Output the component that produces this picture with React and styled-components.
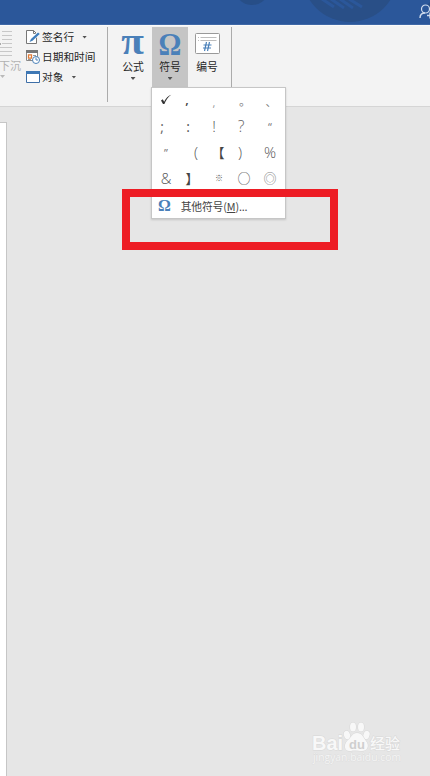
import React from 'react';
import styled, { createGlobalStyle } from 'styled-components';

const Global = createGlobalStyle`
  * { box-sizing: border-box; }
  body { margin: 0; background: #e6e6e6; }
`;
const Window = styled.div`
  position: relative;
  display: flex;
  flex-direction: column;
  width: 430px;
  height: 776px;
  overflow: hidden;
  background: #e6e6e6;
  color: #262626;
  font: 11px/16px "Noto Sans CJK SC", sans-serif;
  svg { display: block; flex: none; }
`;
const TitleBar = styled.header`
  height: 25px;
  flex: none;
  background: #2b579a;
  border-bottom: 1px solid #3f68a6;
`;
const Ribbon = styled.section`
  display: flex;
  height: 82px;
  flex: none;
  padding-top: 1px;
  background: #f3f3f3;
  border-top: 1px solid #fafafa;
  border-bottom: 1px solid #d5d5d5;
`;
const DropCap = styled.div`
  width: 26px;
  flex: none;
  padding-top: 4px;
  color: #b1b1b1;
`;
const DropLabel = styled.div`
  margin: 0 0 2px -1px;
  white-space: nowrap;
`;
const Commands = styled.div`
  display: flex;
  flex-direction: column;
  width: 81px;
  flex: none;
`;
const Command = styled.div`
  display: flex;
  align-items: center;
  gap: 2px;
  height: 20px;
  white-space: nowrap;
  font-size: 10.7px;
`;
const Caret = styled.i`
  width: 5px;
  height: 3px;
  flex: none;
  margin-left: ${p => p.$gap || 0}px;
  background: ${p => p.$color || '#505050'};
  clip-path: polygon(0 0, 100% 0, 50% 100%);
`;
const Divider = styled.div`
  width: 1px;
  height: 75px;
  flex: none;
  margin-left: ${p => p.$before || 0}px;
  background: #ababab;
`;
const Tool = styled.div`
  display: flex;
  flex-direction: column;
  align-items: center;
  width: 36px;
  height: 61px;
  flex: none;
  padding-top: 2px;
  background: ${p => (p.$active ? '#c5c5c5' : 'transparent')};
`;
const Tools = styled.div`
  display: flex;
  padding-left: 7px;
  gap: 1px;
`;
const ToolArt = styled.div`
  display: flex;
  justify-content: center;
  align-items: center;
  width: 26px;
  height: 29px;
`;
const ToolLabel = styled.div`
  margin-bottom: 3px;
  white-space: nowrap;
  font-size: 10.8px;
`;
const Greek = styled.span`
  color: #4a80b9;
  font: bold ${p => p.$size}px/28px "Liberation Serif", serif;
  transform: translateY(${p => p.$dy || 0}px) scale(${p => p.$sx || 1}, ${p => p.$sy || 1});
`;
const Paper = styled.div`
  width: 7px;
  height: 654px;
  margin-top: 15px;
  background: #fff;
  border: solid #c6c6c6;
  border-width: 1px 1px 0 0;
`;
const Menu = styled.div`
  position: absolute;
  left: 151px;
  top: 87px;
  width: 135px;
  height: 132px;
  background: #fff;
  border: 1px solid #c6c6c6;
  box-shadow: 0 1px 2px rgba(0,0,0,.15);
`;
const Symbols = styled.div`
  display: grid;
  grid-template-columns: repeat(5, 26px);
  grid-auto-rows: 26px;
  padding: 0 1px;
  height: 106px;
`;
const Cell = styled.div`
  display: flex;
  justify-content: center;
  align-items: center;
`;
const Glyph = styled.span`
  font: ${p => p.$weight || 300} ${p => p.$size || 14}px/20px ${p => p.$font || '"Open Sans"'}, "Noto Sans CJK SC", sans-serif;
  color: ${p => p.$color || '#555'};
  transform: translate(${p => p.$x || 0}px, ${p => p.$y || 0}px);
`;
const MenuItem = styled.div`
  display: flex;
  align-items: center;
  gap: 10px;
  height: 24px;
  padding-left: 6px;
  color: #444;
  font-size: 10.8px;
  letter-spacing: -0.15px;
  white-space: nowrap;
`;
const Marker = styled.div`
  position: absolute;
  left: 122px;
  top: 189px;
  width: 216px;
  height: 61px;
  border: 8px solid #ed1c24;
`;
const TitleArt = styled.svg`
  position: absolute;
  left: 190px;
  top: 0;
`;
const Watermark = styled.svg`
  position: absolute;
  left: 308px;
  top: 718px;
`;

const cjk = '"Noto Sans CJK SC"';
const symbols = [
  { check: true },
  { t: ',', $x: -5, $y: -2, $weight: 600, $color: '#444', $size: 13 },
  { t: ',', $x: -4, $y: 2, $size: 11, $weight: 400, $color: '#999' },
  { t: '。', $font: cjk, $size: 12, $weight: 400, $color: '#888', $x: 1 },
  { t: '、', $font: cjk, $size: 11, $weight: 400, $color: '#777', $x: 1, $y: 0 },
  { t: ';', $x: -4, $weight: 400, $color: '#666' },
  { t: ':', $x: -4, $weight: 400 },
  { t: '!', $x: -4, $size: 15, $y: -1 },
  { t: '?', $x: -3, $size: 16, $color: '#666', $y: -1 },
  { t: '“', $size: 11, $weight: 400, $color: '#777' },
  { t: '”', $size: 11, $weight: 400, $color: '#777' },
  { t: '(', $x: 4, $size: 15, $y: -1 },
  { t: '【', $font: cjk, $size: 13, $weight: 400, $color: '#444' },
  { t: ')', $x: -4, $size: 15, $y: -1 },
  { t: '%', $size: 15, $y: -1 },
  { t: '&', $size: 15, $y: -1 },
  { t: '】', $font: cjk, $size: 13, $weight: 400, $color: '#444' },
  { t: '※', $font: cjk, $size: 8, $weight: 400, $x: 1, $y: -1 },
  { t: '○', $font: cjk, $size: 13, $weight: 400, $color: '#555', $y: -1 },
  { t: '◎', $font: cjk, $size: 13, $weight: 400, $color: '#888', $y: -1 },
];

const Check = () => (
  <svg width="14" height="16" viewBox="0 0 14 16">
    <path d="M2 7.5 3.8 6.3 5.1 8.7 C7 5 9 3 12.3 1.7 C9 4 7 7 5.4 11 L4 11Z" fill="#333" />
  </svg>
);
const SignatureIcon = () => (
  <svg width="14" height="14" viewBox="0 0 14 14">
    <path d="M.5.5h7l3 3v10H.5Z" fill="#fff" stroke="#777" />
    <path d="M7.5.5v3h3" fill="none" stroke="#777" />
    <path d="M4 9 11.3 2 14 4.4 6.5 11.3 3 12.5Z" fill="#fff" />
    <path d="m5 9 7-6.5L13.8 4 6.5 10.7 3.5 12Z" fill="#3f7ebd" />
  </svg>
);
const DateIcon = () => (
  <svg width="14" height="14" viewBox="0 0 14 14">
    <path d="M.5 1.5h11v9H.5Z" fill="#fff" stroke="#888" />
    <path d="M0 0h12v3H0Z" fill="#777" />
    <path d="M2.5 4.8h3v3.4h-3Z" fill="#fff" stroke="#e07a35" strokeWidth="1.3" />
    <path d="M7 5.5h3M2 9.5h3" stroke="#999" />
    <circle cx="10" cy="10" r="3.5" fill="#fff" stroke="#4c82b8" />
    <path d="M10 7.5V10h2" fill="none" stroke="#4c82b8" />
  </svg>
);
const ObjectIcon = () => (
  <svg width="14" height="12" viewBox="0 0 14 12">
    <path d="M.5.5h13v11H.5Z" fill="#fff" stroke="#3e6fa7" />
    <path d="M0 0h14v3H0Z" fill="#3e78b5" />
  </svg>
);
const NumberIcon = () => (
  <svg width="25" height="22" viewBox="0 0 25 22">
    <rect x=".5" y=".5" width="24" height="20" rx="1" fill="#fff" stroke="#999" />
    <path d="M3 4.5h1m1.5 0h16M3 7.5h1m1.5 0h16" stroke="#bdbdbd" />
    <path d="m11.5 9-2 9m5-9-2 9m-4-6h8m-8.5 3h8" fill="none" stroke="#4a80b9" strokeWidth="1.2" />
  </svg>
);

export default function App() {
  return (
    <Window>
      <Global />
      <TitleBar />
      <Ribbon>
        <DropCap>
          <svg width="13" height="26" viewBox="0 0 13 26">
            <path d="M2 .5h10M2 4.5h10M2 8.5h10M2 12.5h10M0 16.5h12M0 20.5h12M0 24.5h12" stroke="#c8c8c8" />
            <path d="M0 12v2h1v-2Z" fill="#aaa" />
          </svg>
          <DropLabel>下沉</DropLabel>
          <Caret as="div" $color="#b9b9b9" />
        </DropCap>
        <Commands>
          <Command><SignatureIcon />签名行<Caret $gap={6} /></Command>
          <Command><DateIcon />日期和时间</Command>
          <Command><ObjectIcon />对象<Caret $gap={6} /></Command>
        </Commands>
        <Divider />
        <Tools>
          <Tool><ToolArt><Greek $size={35} $dy={-2} $sx={1.18} $sy={1.08}>π</Greek></ToolArt><ToolLabel>公式</ToolLabel><Caret /></Tool>
          <Tool $active><ToolArt><Greek $size={30} $sx={0.95} $sy={1.08}>Ω</Greek></ToolArt><ToolLabel>符号</ToolLabel><Caret /></Tool>
          <Tool><ToolArt><NumberIcon /></ToolArt><ToolLabel>编号</ToolLabel></Tool>
        </Tools>
        <Divider $before={6} />
      </Ribbon>
      <Paper />
      <TitleArt width="240" height="24" viewBox="0 0 240 24">
        <ellipse cx="62" cy="-5" rx="14" ry="10" fill="#274e87" />
        <circle cx="160" cy="-26" r="48" fill="#294f87" />
        <path d="m132-1 12 8m-3-8 13 9m-4-9 13 9m-4-9 13 8" fill="none" stroke="#2b579a" strokeWidth="3" />
        <path d="m237 5 5-5v10Z" fill="#274e87" />
        <circle cx="235.5" cy="9" r="4" fill="none" stroke="#d0dced" strokeWidth="1.2" />
        <path d="M230 18q0-5 5-5m2 2.5h6m-3-3v6" fill="none" stroke="#d0dced" strokeWidth="1.4" />
      </TitleArt>
      <Menu>
        <Symbols>
          {symbols.map(({ t, check, ...look }, i) => (
            <Cell key={i}>{check ? <Check /> : <Glyph {...look}>{t}</Glyph>}</Cell>
          ))}
        </Symbols>
        <MenuItem><Greek $size={16}>Ω</Greek><span>其他符号(<u>M</u>)...</span></MenuItem>
      </Menu>
      <Marker />
      <Watermark width="100" height="50" viewBox="0 0 100 50">
        <g fill="#f8f8f8" stroke="#d8d8d8" strokeWidth="1" paintOrder="stroke">
          <text x="4" y="32" fontFamily="Liberation Sans" fontWeight="bold" fontSize="20" textLength="31" lengthAdjust="spacingAndGlyphs">Bai</text>
          <ellipse cx="39" cy="17" rx="3" ry="4.3" transform="rotate(-18 39 17)" />
          <ellipse cx="45" cy="9" rx="3" ry="4.5" />
          <ellipse cx="53" cy="9" rx="3" ry="4.5" />
          <ellipse cx="58.5" cy="17" rx="3" ry="4.3" transform="rotate(18 58.5 17)" />
          <path d="M49 15c5 0 6 4 9 8 4 5 1 10-4 10-3 0-8-1-11 0-6 1-8-5-4-10 4-3 5-8 10-8Z" />
          <text x="62" y="31" fontFamily="Noto Sans CJK SC" fontWeight="500" fontSize="15" textLength="30">经验</text>
        </g>
        <text x="5" y="43" fontFamily="Open Sans" fontSize="10" textLength="88" lengthAdjust="spacingAndGlyphs" fill="#f5f5f5" stroke="#d8d8d8" strokeWidth=".6" paintOrder="stroke">jingyan.baidu.com</text>
        <text x="41" y="31" fontFamily="Liberation Sans" fontWeight="bold" fontSize="13" fill="#cfcfcf">du</text>
      </Watermark>
    </Window>
  );
}
